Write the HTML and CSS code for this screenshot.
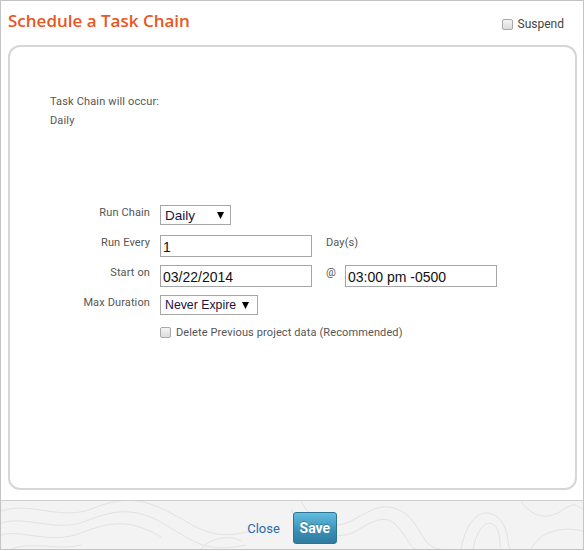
FILE: index.html
```html
<!DOCTYPE html>
<html>
<head>
<meta charset="utf-8">
<link rel="stylesheet" href="styles.css">
</head>
<body>
<div class="dialog">
  <div class="header">
    <h1 class="title">Schedule a Task Chain</h1>
    <label class="suspend"><span class="cb"></span>Suspend</label>
  </div>
  <div class="panel">
    <div class="summary">
      <div>Task Chain will occur:</div>
      <div>Daily</div>
    </div>
    <div class="form">
      <div class="row r20">
        <div class="lbl">Run Chain</div>
        <div class="select sel-daily"><span>Daily</span><svg class="arrow" width="7" height="7" viewBox="0 0 7 7"><polygon points="0,0 7,0 3.5,7" fill="#000"/></svg></div>
      </div>
      <div class="row">
        <div class="lbl">Run Every</div>
        <div class="input">1</div>
        <div class="aside">Day(s)</div>
      </div>
      <div class="row">
        <div class="lbl">Start on</div>
        <div class="input">03/22/2014</div>
        <div class="at">@</div>
        <div class="input">03:00 pm -0500</div>
      </div>
      <div class="row r20">
        <div class="lbl">Max Duration</div>
        <div class="select sel-expire"><span>Never Expire</span><svg class="arrow" width="7" height="7" viewBox="0 0 7 7"><polygon points="0,0 7,0 3.5,7" fill="#000"/></svg></div>
      </div>
      <div class="row check-row">
        <div class="lbl"></div>
        <label class="delete"><span class="cb"></span>Delete Previous project data (Recommended)</label>
      </div>
    </div>
  </div>
  <div class="footer">
    <svg class="topo" width="582" height="48" viewBox="0 0 582 48" fill="none" stroke="#e2e2e2" stroke-width="1">
      <path d="M0 10 C30 0 60 20 90 8 S140 -4 170 12 S210 40 250 30"/>
      <path d="M0 22 C25 14 55 32 85 20 S135 6 165 24 S205 52 245 44"/>
      <path d="M0 34 C20 28 50 44 80 32 S130 18 160 36"/>
      <path d="M10 48 C30 40 60 50 80 44"/>
      <path d="M300 0 C310 20 330 30 350 20 S380 0 400 10 S420 48 440 48"/>
      <path d="M290 8 C300 30 335 42 355 30 S385 14 395 24 S410 48 415 48"/>
      <path d="M460 48 C465 20 480 5 495 15 S505 48 510 48"/>
      <path d="M472 48 C476 28 485 18 493 24 S498 48 500 48"/>
      <path d="M520 0 C530 15 545 20 560 10 S575 5 582 8"/>
      <path d="M530 48 C540 30 560 25 582 30"/>
      <path d="M200 48 C210 36 230 34 240 40"/>
    </svg>
    <div class="actions">
      <a class="close">Close</a>
      <button class="save">Save</button>
    </div>
  </div>
</div>
</body>
</html>
```

FILE: styles.css
```css
html, body {
  margin: 0;
  padding: 0;
  background: #fff;
}
.dialog {
  width: 584px;
  height: 550px;
  box-sizing: border-box;
  border: 1px solid #c4c4c4;
  display: flex;
  flex-direction: column;
  font-family: Roboto, "Liberation Sans", sans-serif;
}
.header {
  height: 44px;
  display: flex;
  justify-content: space-between;
  align-items: flex-start;
  padding: 0 19px 0 7px;
}
.title {
  margin: 9px 0 0 0;
  font-family: "Open Sans", sans-serif;
  font-weight: 600;
  font-size: 17px;
  line-height: 22px;
  color: #e9561e;
}
.suspend {
  margin-top: 15px;
  display: flex;
  align-items: center;
  font-size: 12px;
  line-height: 16px;
  color: #444;
}
.cb {
  display: inline-block;
  width: 9px;
  height: 9px;
  border: 1px solid #a8a8a8;
  border-radius: 2px;
  background: linear-gradient(#f4f4f4, #dcdcdc);
  margin-right: 5px;
}
.panel {
  margin: 0 6px 0 7px;
  height: 445px;
  box-sizing: border-box;
  border: 2px solid #d6d6d6;
  border-radius: 12px;
  padding: 45px 0 0 40px;
}
.summary {
  font-size: 11px;
  line-height: 19px;
  letter-spacing: 0.15px;
  color: #555;
}
.form {
  margin-top: 75px;
  display: flex;
  flex-direction: column;
}
.row {
  display: flex;
  align-items: flex-start;
  height: 30px;
}
.lbl {
  width: 100px;
  margin-right: 10px;
  text-align: right;
  font-size: 11px;
  line-height: 13px;
  letter-spacing: 0.12px;
  padding-top: 1px;
  color: #555;
}
.input {
  width: 152px;
  height: 22px;
  box-sizing: border-box;
  border: 1px solid #a6a6a6;
  padding: 0 2px;
  font-family: "Liberation Sans", Arial, sans-serif;
  font-size: 14px;
  line-height: 22px;
  color: #111;
  white-space: nowrap;
}
.aside {
  margin-left: 14px;
  font-size: 11px;
  line-height: 13px;
  letter-spacing: 0.12px;
  padding-top: 1px;
  color: #555;
}
.at {
  width: 33px;
  padding-left: 14px;
  box-sizing: border-box;
  font-size: 11px;
  line-height: 13px;
  padding-top: 1px;
  color: #555;
}
.select {
  height: 20px;
  box-sizing: border-box;
  border: 1px solid #a6a6a6;
  background: #fff;
  display: flex;
  align-items: center;
  justify-content: space-between;
  padding: 0 6px 0 4px;
  font-family: "Liberation Sans", Arial, sans-serif;
  font-size: 13.5px;
  color: #1c1240;
  white-space: nowrap;
}
.sel-daily { width: 71px; }
.sel-expire { width: 98px; padding-right: 8px; font-size: 12.3px; }
.arrow {
  display: block;
  margin-top: 1px;
}
.check-row { height: 20px; }
.check-row .lbl { padding-top: 0; }
.delete {
  margin-top: 1px;
  display: flex;
  align-items: center;
  font-size: 11px;
  line-height: 13px;
  letter-spacing: 0.12px;
  color: #555;
}
.footer {
  position: relative;
  margin-top: 10px;
  flex: 1;
  border-top: 1px solid #cfcfcf;
  background: #f3f3f3;
  display: flex;
  align-items: center;
  justify-content: center;
}
.topo {
  position: absolute;
  left: 0;
  top: 0;
}
.actions {
  position: relative;
  display: flex;
  align-items: center;
  gap: 13px;
  padding-top: 6px;
}
.close {
  font-size: 13px;
  color: #2a6aad;
}
.save {
  width: 44px;
  height: 32px;
  border: 1px solid #2e7391;
  border-radius: 3px;
  background: linear-gradient(#62bde0, #3a8fb4 60%, #2f7d9f);
  color: #fff;
  font-family: Roboto, sans-serif;
  font-weight: 700;
  font-size: 14px;
  padding: 0;
  text-shadow: 0 -1px 0 rgba(0,0,0,0.25);
}
```
